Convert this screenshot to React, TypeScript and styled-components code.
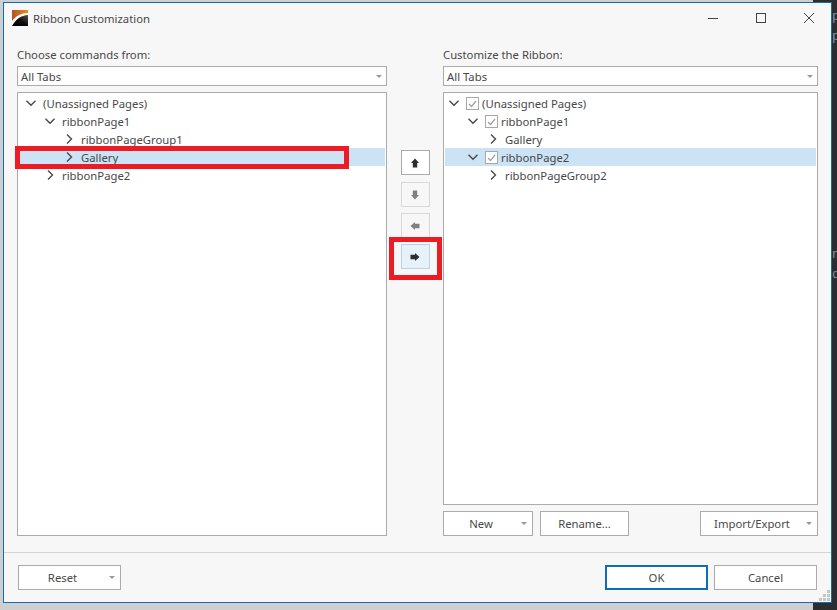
import React from "react";
import styled, { createGlobalStyle } from "styled-components";

const Global = createGlobalStyle`
  html, body { margin: 0; padding: 0; background: #d8d8d8; }
  * { box-sizing: border-box; }
`;

const Screen = styled.div`
  position: relative;
  width: 837px;
  height: 610px;
  padding: 2px 0 0 3px;
  background: linear-gradient(90deg, #cfcfcf 0 813px, #2d2d2d 813px);
  overflow: hidden;
  font-family: "Noto Sans", "Open Sans", sans-serif;
  font-size: 11.3px;
  color: #484848;
`;

const CodeGlyph = styled.span<{ $top: number; $color: string }>`
  position: absolute;
  left: 832px;
  top: ${(p) => p.$top}px;
  font-family: "Liberation Mono", monospace;
  font-size: 13px;
  line-height: 14px;
  color: ${(p) => p.$color};
`;

const Dialog = styled.div`
  position: relative;
  width: 829px;
  height: 601px;
  border: 1px solid #0f6cbd;
  background: #f7f7f7;
  display: flex;
  flex-direction: column;
`;

const TitleBar = styled.div`
  height: 30px;
  display: flex;
  align-items: center;
  padding-left: 8px;
  gap: 5px;
`;

const Title = styled.div`
  flex: 1;
`;

const WinGroup = styled.div`
  display: flex;
`;

const WinBtn = styled.div`
  width: 48px;
  height: 30px;
  padding-right: 14px;
  display: flex;
  align-items: center;
  justify-content: center;
  &:last-child {
    width: 34px;
    padding-right: 0;
    margin-right: 5px;
  }
`;

const Body = styled.div`
  flex: 1;
  display: grid;
  grid-template-columns: 370px 56px 375px;
  padding: 11px 0 0 13px;
`;

const Column = styled.div`
  display: flex;
  flex-direction: column;
`;

const LeftWrap = styled.div`
  position: relative;
`;

const Label = styled.div`
  height: 22px;
  line-height: 21px;
`;

const Combo = styled.div`
  height: 20px;
  background: #fff;
  border: 1px solid #ababab;
  padding: 0 4px 0 3px;
  display: flex;
  align-items: center;
  justify-content: space-between;
  margin-bottom: 6px;
`;

const Caret = styled.span`
  width: 0;
  height: 0;
  border-left: 3px solid transparent;
  border-right: 3px solid transparent;
  border-top: 3px solid #999;
`;

const TreeBox = styled.div<{ $short?: boolean }>`
  height: ${(p) => (p.$short ? 413 : 444)}px;
  background: #fff;
  border: 1px solid #ababab;
  padding: 1px;
`;

const Row = styled.div<{ $selected?: boolean; $indent: number }>`
  height: 18px;
  display: flex;
  align-items: center;
  padding-left: ${(p) => p.$indent}px;
  background: ${(p) => (p.$selected ? "#cbe3f5" : "transparent")};
  gap: 5px;
`;

const Check = styled.span`
  width: 13px;
  height: 13px;
  border: 1px solid #a8a8a8;
  display: flex;
  align-items: center;
  justify-content: center;
  margin-right: -2px;
  background: #fff;
`;

const Highlight = styled.div<{ $l: number; $t: number; $w: number; $h: number }>`
  position: absolute;
  left: ${(p) => p.$l}px;
  top: ${(p) => p.$t}px;
  width: ${(p) => p.$w}px;
  height: ${(p) => p.$h}px;
  border: 5px solid #ed1c24;
  pointer-events: none;
`;

const MoveCol = styled.div`
  position: relative;
  display: flex;
  flex-direction: column;
  align-items: center;
  gap: 6px;
  padding-top: 106px;
`;

const MoveBtn = styled.div<{ $state: "on" | "off" | "hot" }>`
  width: 29px;
  height: 25px;
  display: flex;
  align-items: center;
  justify-content: center;
  background: ${(p) => (p.$state === "hot" ? "#e6f1fa" : p.$state === "on" ? "#fff" : "#f7f7f7")};
  border: 1px solid ${(p) => (p.$state === "hot" ? "#b9d2e8" : p.$state === "on" ? "#ababab" : "#d8d8d8")};
  &:first-child {
    margin-bottom: 1px;
  }
`;

const ActionRow = styled.div`
  display: flex;
  gap: 7px;
  margin-top: 6px;
`;

const Btn = styled.div<{ $w: number; $primary?: boolean; $menu?: boolean }>`
  width: ${(p) => p.$w}px;
  height: 25px;
  background: #fff;
  border: ${(p) => (p.$primary ? "2px solid #0f6cbd" : "1px solid #ababab")};
  position: relative;
  display: flex;
  align-items: center;
  justify-content: center;
  padding-right: ${(p) => (p.$menu ? 14 : 0)}px;
`;

const BtnCaret = styled.span`
  position: absolute;
  right: 5px;
  top: 10px;
  width: 0;
  height: 0;
  border-left: 3px solid transparent;
  border-right: 3px solid transparent;
  border-top: 3px solid #999;
`;

const Spacer = styled.div`
  flex: 1;
`;

const Footer = styled.div`
  height: 50px;
  border-top: 1px solid #d4d4d4;
  display: flex;
  align-items: flex-start;
  padding: 12px 14px 0 14px;
  gap: 6px;
`;

const Grip = styled.svg`
  position: absolute;
  right: 0;
  bottom: 0;
`;

const ArrowSvg = styled.svg<{ $dir: number }>`
  transform: rotate(${(p) => p.$dir}deg);
`;

const Chevron = ({ open }: { open?: boolean }) => (
  <svg width="14" height="14" viewBox="0 0 14 14" fill="none" stroke="#484848" strokeWidth="1.4">
    {open ? <path d="M2.5 4.8L7 9.2l4.5-4.4" /> : <path d="M5 2.5L9.5 7 5 11.5" />}
  </svg>
);

const Tick = () => (
  <svg width="11" height="11" viewBox="0 0 11 11" fill="none" stroke="#a0a0a0" strokeWidth="1.2">
    <path d="M2 6l2.5 2.5L9 3" />
  </svg>
);

const Arrow = ({ dir, color }: { dir: number; color: string }) => (
  <ArrowSvg $dir={dir} width="10" height="10" viewBox="0 0 10 10">
    <path d="M5 0.5L9 5H7.2V9.5H2.8V5H1z" fill={color} />
  </ArrowSvg>
);

const Logo = () => (
  <svg width="16" height="16" viewBox="0 0 16 16">
    <defs>
      <linearGradient id="logoTop" x1="0" y1="0" x2="1" y2="0">
        <stop offset="0" stopColor="#a8552a" />
        <stop offset="1" stopColor="#f28a1e" />
      </linearGradient>
      <linearGradient id="logoBottom" x1="1" y1="0" x2="0" y2="1">
        <stop offset="0" stopColor="#555" />
        <stop offset="0.5" stopColor="#0c0c0c" />
        <stop offset="1" stopColor="#000" />
      </linearGradient>
    </defs>
    <rect width="16" height="16" fill="#fff" />
    <path d="M0 0h16v3C9 3 4 6 0 11z" fill="url(#logoTop)" />
    <path d="M0 16C4 9 9 5.5 16 5v11z" fill="url(#logoBottom)" />
  </svg>
);

const GripDots = () => (
  <Grip width="13" height="13" viewBox="0 0 13 13" fill="#c6c6c6">
    <rect x="9" y="1" width="3" height="3" />
    <rect x="5" y="5" width="3" height="3" />
    <rect x="9" y="5" width="3" height="3" />
    <rect x="1" y="9" width="3" height="3" />
    <rect x="5" y="9" width="3" height="3" />
    <rect x="9" y="9" width="3" height="3" />
  </Grip>
);

export default function App() {
  return (
    <Screen>
      <Global />
      <CodeGlyph $top={10} $color="#7f93a3">p</CodeGlyph>
      <CodeGlyph $top={30} $color="#7f93a3">p</CodeGlyph>
      <CodeGlyph $top={248} $color="#8a9a80">n</CodeGlyph>
      <CodeGlyph $top={268} $color="#8a8a80">d</CodeGlyph>
      <Dialog>
        <TitleBar>
          <Logo />
          <Title>Ribbon Customization</Title>
          <WinGroup>
            <WinBtn>
              <svg width="12" height="12" viewBox="0 0 12 12" stroke="#444"><path d="M1 6.5h10" /></svg>
            </WinBtn>
            <WinBtn>
              <svg width="12" height="12" viewBox="0 0 12 12" stroke="#444" fill="none"><rect x="1.5" y="1.5" width="9" height="9" /></svg>
            </WinBtn>
            <WinBtn>
              <svg width="12" height="12" viewBox="0 0 12 12" stroke="#444"><path d="M1 1l10 10M11 1L1 11" /></svg>
            </WinBtn>
          </WinGroup>
        </TitleBar>
        <Body>
          <LeftWrap>
            <Column>
              <Label>Choose commands from:</Label>
              <Combo>All Tabs<Caret /></Combo>
              <TreeBox>
                <Row $indent={5}><Chevron open />(Unassigned Pages)</Row>
                <Row $indent={24}><Chevron open />ribbonPage1</Row>
                <Row $indent={43}><Chevron />ribbonPageGroup1</Row>
                <Row $indent={43} $selected><Chevron />Gallery</Row>
                <Row $indent={24}><Chevron />ribbonPage2</Row>
              </TreeBox>
            </Column>
            <Highlight $l={-2} $t={102} $w={334} $h={23} />
          </LeftWrap>
          <MoveCol>
            <MoveBtn $state="on"><Arrow dir={0} color="#2e2e2e" /></MoveBtn>
            <MoveBtn $state="off"><Arrow dir={180} color="#808080" /></MoveBtn>
            <MoveBtn $state="off"><Arrow dir={270} color="#808080" /></MoveBtn>
            <MoveBtn $state="hot"><Arrow dir={90} color="#2e2e2e" /></MoveBtn>
            <Highlight $l={2} $t={193} $w={53} $h={43} />
          </MoveCol>
          <Column>
            <Label>Customize the Ribbon:</Label>
            <Combo>All Tabs<Caret /></Combo>
            <TreeBox $short>
              <Row $indent={2}><Chevron open /><Check><Tick /></Check>(Unassigned Pages)</Row>
              <Row $indent={21}><Chevron open /><Check><Tick /></Check>ribbonPage1</Row>
              <Row $indent={41}><Chevron />Gallery</Row>
              <Row $indent={21} $selected><Chevron open /><Check><Tick /></Check>ribbonPage2</Row>
              <Row $indent={41}><Chevron />ribbonPageGroup2</Row>
            </TreeBox>
            <ActionRow>
              <Btn $w={90} $menu>New<BtnCaret /></Btn>
              <Btn $w={89}>Rename...</Btn>
              <Spacer />
              <Btn $w={118} $menu>Import/Export<BtnCaret /></Btn>
            </ActionRow>
          </Column>
        </Body>
        <Footer>
          <Btn $w={103} $menu>Reset<BtnCaret /></Btn>
          <Spacer />
          <Btn $w={103} $primary>OK</Btn>
          <Btn $w={103}>Cancel</Btn>
        </Footer>
        <GripDots />
      </Dialog>
    </Screen>
  );
}
